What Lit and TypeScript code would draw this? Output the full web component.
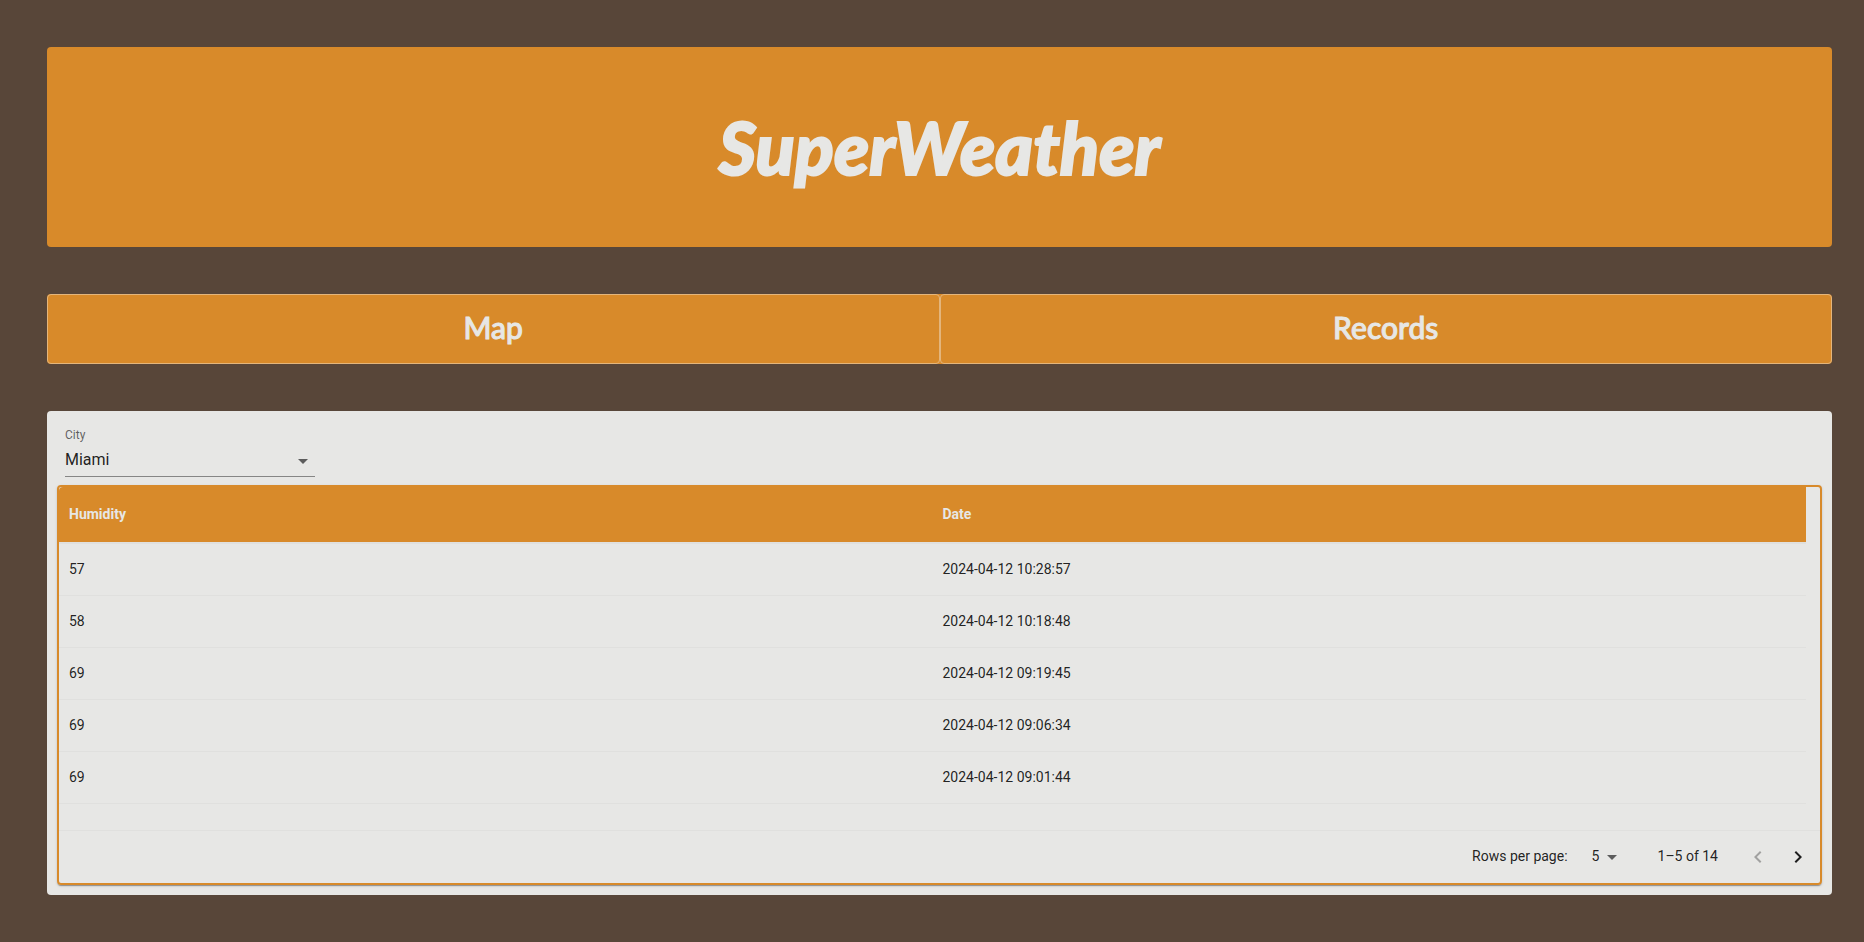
import { LitElement, html, css } from "lit";
import { customElement, state } from "lit/decorators.js";

interface WeatherRecord {
  humidity: number;
  date: string;
}

const RECORDS: WeatherRecord[] = [
  { humidity: 57, date: "2024-04-12 10:28:57" },
  { humidity: 58, date: "2024-04-12 10:18:48" },
  { humidity: 69, date: "2024-04-12 09:19:45" },
  { humidity: 69, date: "2024-04-12 09:06:34" },
  { humidity: 69, date: "2024-04-12 09:01:44" },
];

@customElement("records-table")
export class RecordsTable extends LitElement {
  static styles = css`
    :host {
      display: block;
      border: 2px solid #d88a2a;
      border-radius: 4px;
      box-shadow: 0 2px 1px -1px rgba(0, 0, 0, 0.2), 0 1px 1px rgba(0, 0, 0, 0.14),
        0 1px 3px rgba(0, 0, 0, 0.12);
      color: rgba(0, 0, 0, 0.87);
      font: 400 14px/20px Roboto, sans-serif;
    }
    .scroller {
      padding: 0 14px 26px 0;
    }
    table {
      width: 100%;
      table-layout: fixed;
      border-collapse: separate;
      border-spacing: 0;
    }
    th,
    td {
      box-sizing: border-box;
      height: 52px;
      padding: 0 10px 2px;
      text-align: left;
      border-bottom: 1px solid #e0e0de;
    }
    th {
      height: 57px;
      border-bottom-width: 2px;
      background: #d88a2a;
      background-clip: padding-box;
      color: #e7e7e5;
      font-weight: 700;
    }
    th:first-child {
      border-top-left-radius: 4px;
    }
    .footer {
      display: flex;
      align-items: center;
      justify-content: flex-end;
      height: 52px;
      padding-right: 2px;
      border-top: 1px solid #e0e0de;
    }
    .caption {
      padding-bottom: 2px;
    }
    .size {
      position: relative;
      display: flex;
      align-items: center;
      margin: 0 34px 0 16px;
    }
    select {
      appearance: none;
      width: 40px;
      padding: 0 24px 2px 8px;
      border: 0;
      background: none;
      color: inherit;
      font: inherit;
    }
    .size svg {
      position: absolute;
      right: 0;
      pointer-events: none;
    }
    .range {
      margin-right: 20px;
    }
    button {
      display: grid;
      place-items: center;
      width: 40px;
      height: 40px;
      padding: 0;
      border: 0;
      background: none;
      color: rgba(0, 0, 0, 0.87);
    }
    button:disabled {
      color: rgba(0, 0, 0, 0.3);
    }
    svg {
      width: 24px;
      height: 24px;
      fill: currentColor;
    }
    .arrow {
      color: rgba(0, 0, 0, 0.6);
    }
  `;

  render() {
    return html`
      <div class="scroller">
        <table>
          <thead>
            <tr><th scope="col">Humidity</th><th scope="col">Date</th></tr>
          </thead>
          <tbody>
            ${RECORDS.map((r) => html`<tr><td>${r.humidity}</td><td>${r.date}</td></tr>`)}
          </tbody>
        </table>
      </div>
      <div class="footer">
        <label class="caption" for="size">Rows per page:</label>
        <span class="size">
          <select id="size"><option>5</option><option>10</option></select>
          <svg class="arrow" viewBox="0 0 24 24"><path d="M7 10l5 5 5-5z" /></svg>
        </span>
        <span class="caption range">1–5 of 14</span>
        <button disabled aria-label="Previous page">
          <svg viewBox="0 0 24 24"><path d="M15.41 7.41 14 6l-6 6 6 6 1.41-1.41L10.83 12z" /></svg>
        </button>
        <button aria-label="Next page">
          <svg viewBox="0 0 24 24"><path d="M10 6 8.59 7.41 13.17 12l-4.58 4.59L10 18l6-6z" /></svg>
        </button>
      </div>
    `;
  }
}

@customElement("app-root")
export class AppRoot extends LitElement {
  static styles = css`
    :host {
      box-sizing: border-box;
      display: flex;
      flex-direction: column;
      gap: 47px;
      min-height: 100vh;
      padding: 47px 32px 46px 47px;
      background: #584639;
      color: #e7e7e5;
      font-family: Roboto, sans-serif;
    }
    .banner {
      display: grid;
      place-items: center;
      height: 200px;
      border-radius: 4px;
      background: #d88a2a;
    }
    h1 {
      margin: 0;
      font: italic 900 72px/104px Lato, sans-serif;
      -webkit-text-stroke: 2px currentColor;
    }
    .tabs {
      display: grid;
      grid-template-columns: 1fr 1fr;
      border-radius: 4px;
      background: #d88a2a;
    }
    .tab {
      height: 70px;
      padding: 0 0 4px;
      border: 1px solid #e3b57c;
      border-radius: 4px;
      background: none;
      color: inherit;
      font: 500 30px/40px Lato, sans-serif;
      -webkit-text-stroke: 1px currentColor;
    }
    .panel {
      padding: 16px 10px 10px;
      border-radius: 4px;
      background: #e7e7e5;
      color: rgba(0, 0, 0, 0.87);
    }
    .field {
      position: relative;
      width: 250px;
      margin: 0 8px 8px;
    }
    .field label {
      display: block;
      color: rgba(0, 0, 0, 0.6);
      font-size: 12px;
      line-height: 16px;
    }
    .field select {
      display: block;
      box-sizing: border-box;
      appearance: none;
      width: 100%;
      height: 34px;
      padding: 0 24px 0 0;
      border: 0;
      border-bottom: 1px solid #868685;
      border-radius: 0;
      background: none;
      color: inherit;
      font: 400 16px/24px Roboto, sans-serif;
    }
    .field svg {
      position: absolute;
      right: 0;
      bottom: 4px;
      width: 24px;
      height: 24px;
      fill: rgba(0, 0, 0, 0.6);
      pointer-events: none;
    }
  `;

  @state() private city = "Miami";

  render() {
    return html`
      <header class="banner"><h1>SuperWeather</h1></header>
      <nav class="tabs">
        <button class="tab">Map</button>
        <button class="tab">Records</button>
      </nav>
      <main class="panel">
        <div class="field">
          <label for="city">City</label>
          <select id="city"><option>${this.city}</option></select>
          <svg viewBox="0 0 24 24"><path d="M7 10l5 5 5-5z" /></svg>
        </div>
        <records-table></records-table>
      </main>
    `;
  }
}
